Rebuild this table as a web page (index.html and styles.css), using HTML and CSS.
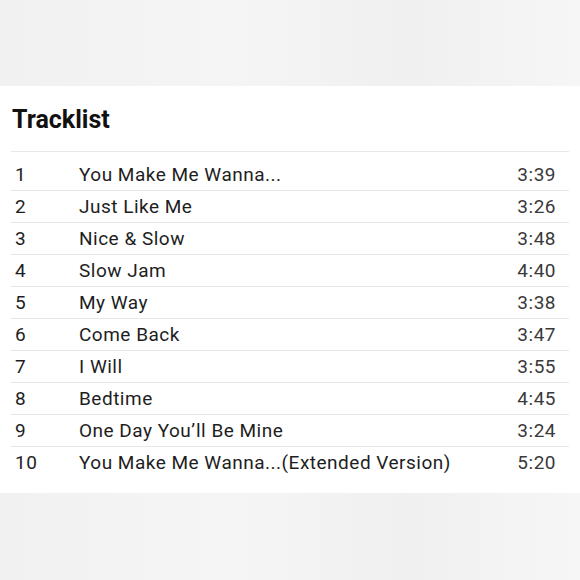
FILE: index.html
```html
<!DOCTYPE html>
<html lang="en">
<head>
    <meta charset="UTF-8">
    <meta name="viewport" content="width=device-width, initial-scale=1.0">
    <title>Tracklist</title>
    <link rel="stylesheet" href="styles.css">
</head>
<body>
    <div class="top-space"></div>

    <div class="panel">
        <h2 class="title">Tracklist</h2>

        <div class="tracks">
            <div class="track first"><span class="num">1</span><span class="name">You Make Me Wanna...</span><span class="time">3:39</span></div>
            <div class="track"><span class="num">2</span><span class="name">Just Like Me</span><span class="time">3:26</span></div>
            <div class="track"><span class="num">3</span><span class="name">Nice &amp; Slow</span><span class="time">3:48</span></div>
            <div class="track"><span class="num">4</span><span class="name">Slow Jam</span><span class="time">4:40</span></div>
            <div class="track"><span class="num">5</span><span class="name">My Way</span><span class="time">3:38</span></div>
            <div class="track"><span class="num">6</span><span class="name">Come Back</span><span class="time">3:47</span></div>
            <div class="track"><span class="num">7</span><span class="name">I Will</span><span class="time">3:55</span></div>
            <div class="track"><span class="num">8</span><span class="name">Bedtime</span><span class="time">4:45</span></div>
            <div class="track"><span class="num">9</span><span class="name">One Day You’ll Be Mine</span><span class="time">3:24</span></div>
            <div class="track"><span class="num">10</span><span class="name">You Make Me Wanna...(Extended Version)</span><span class="time">5:20</span></div>
        </div>
    </div>
</body>
</html>
```

FILE: styles.css
```css
* {
    margin: 0;
    padding: 0;
    box-sizing: border-box;
}
body {
    font-family: Roboto, "Liberation Sans", sans-serif;
    background: linear-gradient(90deg, #f1f1f1 0%, #f5f5f5 40%, #f0f0f0 70%, #f6f6f6 100%);
    color: #1e1e1e;
}
.top-space {
    height: 86px;
}
.panel {
    background: white;
    padding: 18px 11px 15px 11px;
}
.title {
    font-size: 25px;
    line-height: 31px;
    font-weight: bold;
    color: #111;
    padding-left: 1px;
    margin-bottom: 16px;
}
.track {
    display: grid;
    grid-template-columns: 64px 1fr auto;
    height: 32px;
    padding: 0 13px 0 4px;
    border-top: 1px solid #e8e8e8;
    font-size: 19px;
    line-height: 31px;
    letter-spacing: 0.5px;
}
.track.first {
    height: 39px;
    padding-top: 7px;
}
.time {
    color: #3a3a3a;
}
```
